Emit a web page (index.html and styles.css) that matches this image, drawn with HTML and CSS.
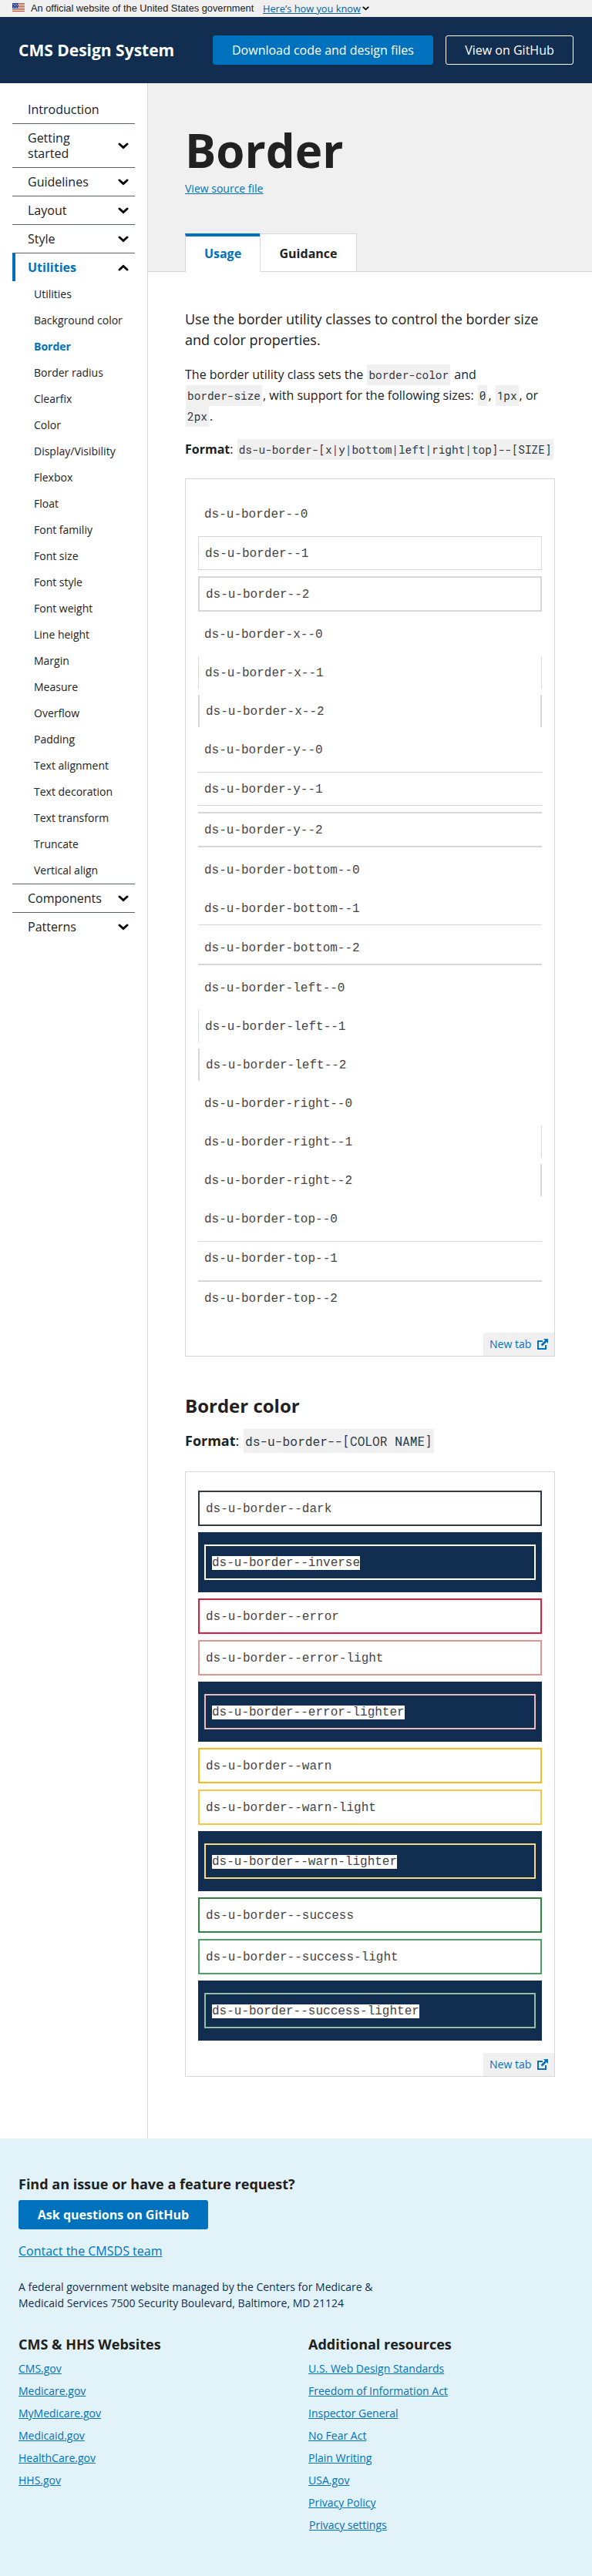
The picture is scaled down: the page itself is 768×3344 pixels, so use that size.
FILE: index.html
```html
<!DOCTYPE html>
<html lang="en">
<head>
<meta charset="utf-8">
<title>Border - CMS Design System</title>
<link rel="stylesheet" href="styles.css">
</head>
<body>
<svg class="defs" width="0" height="0">
  <symbol id="chev" viewBox="0 0 14 9"><path d="M2 2l5 4.6L12 2" fill="none" stroke="#000" stroke-width="2.9" stroke-linecap="round"/></symbol>
  <symbol id="ext" viewBox="0 0 14 14"><path d="M7 3H1v10h10V8" fill="none" stroke="#0071bc" stroke-width="2"/><path d="M8 0h6v6l-2-2-5.4 5.4-2-2L10 2z" fill="#0071bc"/></symbol>
</svg>
<div class="banner">
  <svg class="flag" viewBox="0 0 16 11"><path fill="#fff" d="M0 0h16v11H0z"/><path d="M0 .5h16M0 2.5h16M0 4.5h16M0 6.5h16M0 8.5h16M0 10.5h16" stroke="#db3e1f"/><path fill="#1e33b1" d="M0 0h8v7H0z"/><path d="M1 1.5h7M2 3.5h6M1 5.5h7" stroke="#fff" stroke-dasharray="1 1"/></svg>
  <span class="banner-text">An official website of the United States government</span>
  <a class="banner-link">Here’s how you know</a>
  <svg class="banner-chev"><use href="#chev"/></svg>
</div>
<header class="header">
  <div class="brand">CMS Design System</div>
  <a class="btn btn-primary">Download code and design files</a>
  <a class="btn btn-outline">View on GitHub</a>
</header>
<div class="layout">
  <nav class="nav">
    <div class="item">Introduction</div>
    <div class="item"><span>Getting<br>started</span><svg><use href="#chev"/></svg></div>
    <div class="item">Guidelines<svg><use href="#chev"/></svg></div>
    <div class="item">Layout<svg><use href="#chev"/></svg></div>
    <div class="item">Style<svg><use href="#chev"/></svg></div>
    <div class="item open">Utilities<svg><use href="#chev"/></svg></div>
    <ul class="sub">
      <li>Utilities</li><li>Background color</li><li class="current">Border</li><li>Border radius</li><li>Clearfix</li><li>Color</li><li>Display/Visibility</li><li>Flexbox</li><li>Float</li><li>Font familiy</li><li>Font size</li><li>Font style</li><li>Font weight</li><li>Line height</li><li>Margin</li><li>Measure</li><li>Overflow</li><li>Padding</li><li>Text alignment</li><li>Text decoration</li><li>Text transform</li><li>Truncate</li><li>Vertical align</li>
    </ul>
    <div class="item">Components<svg><use href="#chev"/></svg></div>
    <div class="item last">Patterns<svg><use href="#chev"/></svg></div>
  </nav>
  <main class="main">
    <div class="page-head">
      <h1>Border</h1>
      <a class="source">View source file</a>
      <div class="tabs"><div class="tab active">Usage</div><div class="tab">Guidance</div></div>
    </div>
    <div class="content">
      <p class="lead">Use the border utility classes to control the border size and color properties.</p>
      <p class="text">The border utility class sets the <code>border-color</code> and <code>border-size</code>, with support for the following sizes: <code>0</code>, <code>1px</code>, or <code>2px</code>.</p>
      <p class="format"><b>Format</b>: <code>ds-u-border-[x|y|bottom|left|right|top]--[SIZE]</code></p>
      <section class="example">
        <div class="stack">
          <div class="demo">ds-u-border--0</div>
          <div class="demo t1 r1 b1 l1">ds-u-border--1</div>
          <div class="demo t2 r2 b2 l2">ds-u-border--2</div>
          <div class="demo">ds-u-border-x--0</div>
          <div class="demo l1 r1">ds-u-border-x--1</div>
          <div class="demo l2 r2">ds-u-border-x--2</div>
          <div class="demo">ds-u-border-y--0</div>
          <div class="demo t1 b1">ds-u-border-y--1</div>
          <div class="demo t2 b2">ds-u-border-y--2</div>
          <div class="demo">ds-u-border-bottom--0</div>
          <div class="demo b1">ds-u-border-bottom--1</div>
          <div class="demo b2">ds-u-border-bottom--2</div>
          <div class="demo">ds-u-border-left--0</div>
          <div class="demo l1">ds-u-border-left--1</div>
          <div class="demo l2">ds-u-border-left--2</div>
          <div class="demo">ds-u-border-right--0</div>
          <div class="demo r1">ds-u-border-right--1</div>
          <div class="demo r2">ds-u-border-right--2</div>
          <div class="demo">ds-u-border-top--0</div>
          <div class="demo t1">ds-u-border-top--1</div>
          <div class="demo t2">ds-u-border-top--2</div>
        </div>
        <a class="newtab">New tab<svg><use href="#ext"/></svg></a>
      </section>
      <h2>Border color</h2>
      <p class="format large"><b>Format</b>: <code>ds-u-border--[COLOR NAME]</code></p>
      <section class="example colors">
        <div class="stack">
          <div class="demo box dark">ds-u-border--dark</div>
          <div class="navy"><div class="demo box inverse"><span>ds-u-border--inverse</span></div></div>
          <div class="demo box error">ds-u-border--error</div>
          <div class="demo box error-light">ds-u-border--error-light</div>
          <div class="navy"><div class="demo box error-lighter"><span>ds-u-border--error-lighter</span></div></div>
          <div class="demo box warn">ds-u-border--warn</div>
          <div class="demo box warn-light">ds-u-border--warn-light</div>
          <div class="navy"><div class="demo box warn-lighter"><span>ds-u-border--warn-lighter</span></div></div>
          <div class="demo box success">ds-u-border--success</div>
          <div class="demo box success-light">ds-u-border--success-light</div>
          <div class="navy"><div class="demo box success-lighter"><span>ds-u-border--success-lighter</span></div></div>
        </div>
        <a class="newtab">New tab<svg><use href="#ext"/></svg></a>
      </section>
    </div>
  </main>
</div>
<footer class="footer">
  <h3>Find an issue or have a feature request?</h3>
  <a class="ask">Ask questions on GitHub</a>
  <div class="contact"><a>Contact the CMSDS team</a></div>
  <p class="address">A federal government website managed by the Centers for Medicare &amp; Medicaid Services 7500 Security Boulevard, Baltimore, MD 21124</p>
  <div class="columns">
    <div><h3>CMS &amp; HHS Websites</h3>
      <ul><li><a>CMS.gov</a></li><li><a>Medicare.gov</a></li><li><a>MyMedicare.gov</a></li><li><a>Medicaid.gov</a></li><li><a>HealthCare.gov</a></li><li><a>HHS.gov</a></li></ul>
    </div>
    <div><h3>Additional resources</h3>
      <ul><li><a>U.S. Web Design Standards</a></li><li><a>Freedom of Information Act</a></li><li><a>Inspector General</a></li><li><a>No Fear Act</a></li><li><a>Plain Writing</a></li><li><a>USA.gov</a></li><li><a>Privacy Policy</a></li><li class="settings"><a>Privacy settings</a></li></ul>
    </div>
  </div>
</footer>
</body>
</html>
```
FILE: styles.css
```css
* { box-sizing: border-box; }
body { margin: 0; font: 16px/24px "Open Sans", sans-serif; color: #212121; background: #fff; }
h1, h2, h3, p, ul { margin: 0; padding: 0; }
ul { list-style: none; }
svg { display: block; flex: none; }
.defs { position: absolute; }

.banner { height: 22px; padding-left: 16px; background: #f0f0f0; display: flex; align-items: center; font-size: 12.8px; line-height: 22px; white-space: nowrap; }
.flag { width: 16px; height: 11px; margin: 0 8px 3px 0; }
.banner-text { width: 301px; font-family: "Liberation Sans", Arial, sans-serif; }
.banner-link { color: #0063a6; text-decoration: underline; }
.banner-chev { width: 9px; height: 6px; margin-left: 2px; }

.header { height: 86px; padding: 0 24px; background: #112e51; color: #fff; display: flex; align-items: center; }
.brand { font-size: 21px; font-weight: 700; margin-right: auto; white-space: nowrap; }
.btn { height: 38px; line-height: 36px; border: 1px solid; border-radius: 3px; text-align: center; white-space: nowrap; }
.btn-primary { width: 286px; background: #0071bc; border-color: #0071bc; }
.btn-outline { width: 166px; border-color: #fff; margin-left: 16px; }

.layout { display: flex; height: 2668px; }
.nav { width: 192px; padding: 16px; border-right: 1px solid #d6d7d9; }
.item { display: flex; align-items: center; justify-content: space-between; border-bottom: 1px solid #5b616b; padding: 8px 8px 8px 20px; line-height: 20px; }
.item svg { width: 14px; height: 9px; }
.item.open { border-bottom: 0; border-left: 4px solid #0071bc; padding-left: 16px; color: #0071bc; font-weight: 700; }
.item.open svg { transform: rotate(180deg); }
.item.last { border-bottom: 0; }
.sub { border-bottom: 1px solid #5b616b; font-size: 14px; }
.sub li { padding: 8px 0 8px 28px; line-height: 18px; white-space: nowrap; }
.sub .current { color: #0071bc; font-weight: 700; }

.main { flex: 1; min-width: 0; }
.page-head { height: 245px; padding: 48px 48px 0; background: #f0f0f0; border-bottom: 1px solid #d6d7d9; }
h1 { font-size: 60px; line-height: 78px; font-weight: 700; }
.source { display: block; height: 69px; font-size: 14px; line-height: 21px; color: #0071bc; text-decoration: underline; }
.tabs { display: flex; height: 50px; }
.tab { width: 126px; height: 49px; margin-left: -1px; background: #fff; border: 1px solid #d6d7d9; border-bottom: 0; font-weight: 700; line-height: 50px; text-align: center; }
.tab.active { width: 98px; height: 50px; margin-left: 0; border-top: 4px solid #0071bc; color: #0071bc; line-height: 44px; }

.content { padding: 48px; }
.lead { font-size: 18px; line-height: 27px; }
.text { margin-top: 18px; line-height: 27px; }
.format { margin-top: 16px; line-height: 27px; white-space: nowrap; }
code { font-family: "Roboto Mono", "Liberation Mono", monospace; font-size: .9em; color: #323a45; background: #f0f0f0; padding: .3em 2px; margin: 0 1px; white-space: nowrap; }

.example { margin-top: 24px; border: 1px solid #d6d7d9; display: flex; flex-direction: column; }
.stack { display: flex; flex-direction: column; gap: 8px; padding: 24px 16px; }
.colors { margin-top: 26px; }
.colors .stack { padding-bottom: 16px; }
.demo { padding: 9px 8px 7px; border: 0 solid #d6d7d9; font: 16px/26px "Courier New", "Liberation Mono", monospace; color: #444; }
.t1 { border-top-width: 1px; } .r1 { border-right-width: 1px; } .b1 { border-bottom-width: 1px; } .l1 { border-left-width: 1px; }
.t2 { border-top-width: 2px; } .r2 { border-right-width: 2px; } .b2 { border-bottom-width: 2px; } .l2 { border-left-width: 2px; }
.box { border-width: 2px; }
.navy { background: #112e51; padding: 16px 8px; }
.navy span { background: #fff; }
.dark { border-color: #323a45; }
.inverse { border-color: #fff; }
.error { border-color: #e31c3d; }
.error-light { border-color: #e59393; }
.error-lighter { border-color: #f1b8b8; }
.warn { border-color: #fdb81e; }
.warn-light { border-color: #f9c642; }
.warn-lighter { border-color: #fad980; }
.success { border-color: #2e8540; }
.success-light { border-color: #4aa564; }
.success-lighter { border-color: #94bfa2; }
.newtab { align-self: flex-end; width: 92px; height: 30px; padding: 0 8px; background: #f0f0f0; color: #0071bc; font-size: 14px; display: flex; align-items: center; justify-content: space-between; white-space: nowrap; }
.newtab svg { width: 14px; height: 14px; }
h2 { margin-top: 48px; font-size: 24px; line-height: 32px; font-weight: 700; }
.format.large { font-size: 18px; }

.footer { height: 568px; padding: 48px 24px 0; background: #e1f3f8; }
.footer h3 { font-size: 18px; line-height: 22px; padding-bottom: 2px; font-weight: 700; }
.footer a { color: #0071bc; text-decoration: underline; }
.footer .ask { display: block; width: 246px; height: 38px; margin-top: 8px; border-radius: 3px; background: #0071bc; color: #fff; font-weight: 700; line-height: 38px; text-align: center; text-decoration: none; }
.contact { margin-top: 16px; }
.address { width: 480px; margin-top: 24px; font-size: 14px; line-height: 21px; color: #112e51; }
.columns { display: grid; grid-template-columns: 376px 1fr; margin-top: 32px; }
.columns ul { margin-top: 8px; }
.columns li { font-size: 14px; line-height: 21px; margin-bottom: 8px; }
.settings { padding-left: 1px; }
```
